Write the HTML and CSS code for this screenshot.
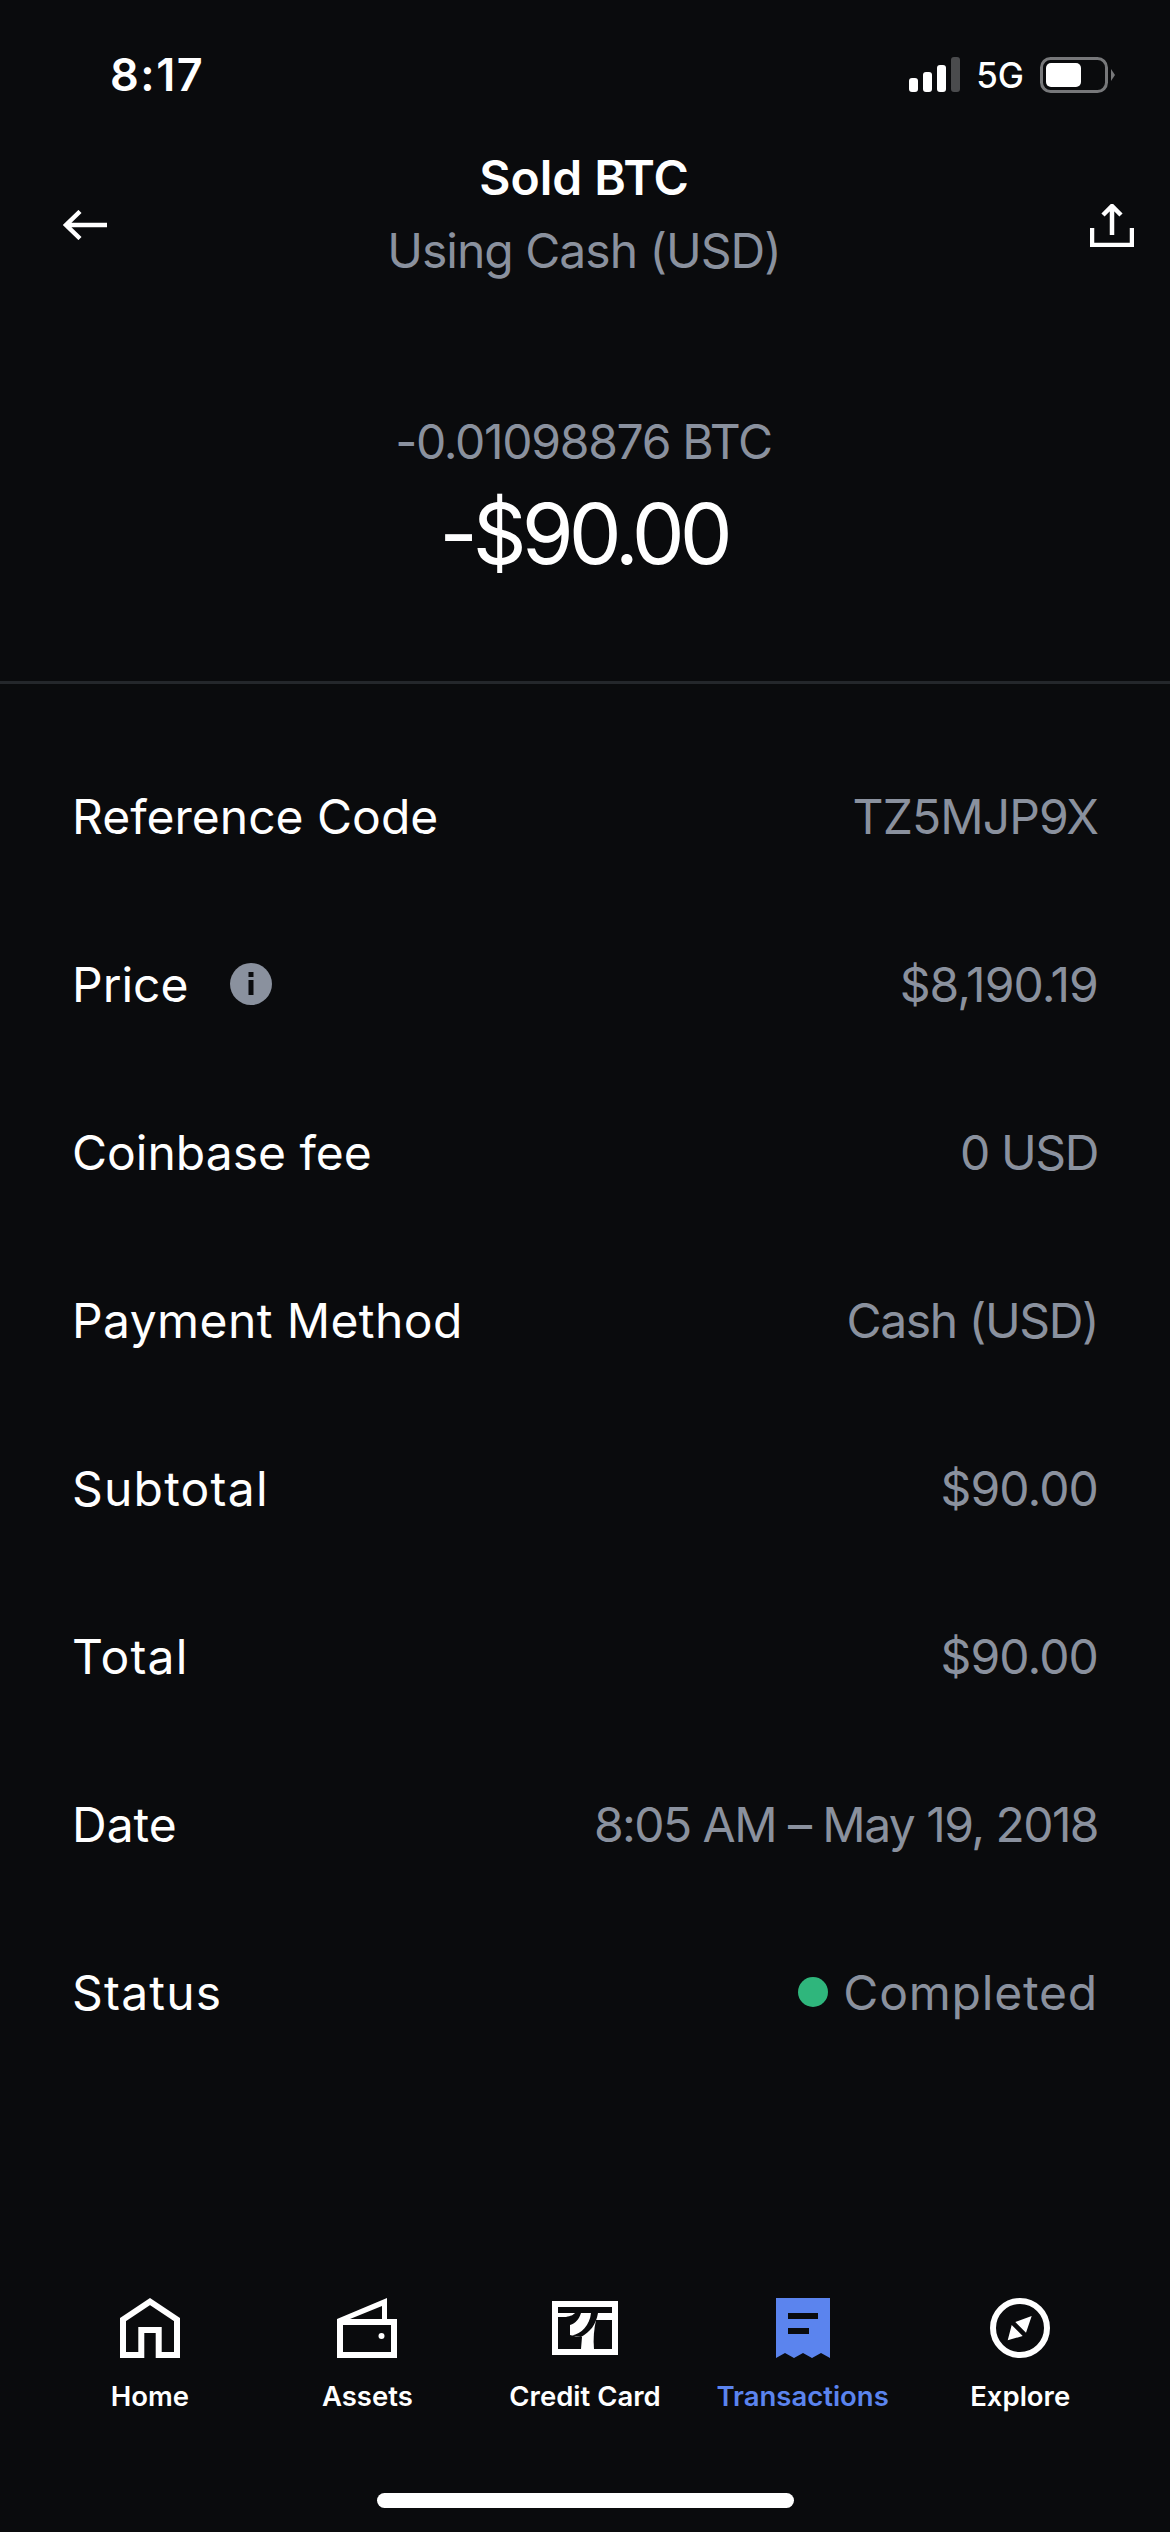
FILE: index.html
```html
<!DOCTYPE html>
<html lang="en">
<head>
<meta charset="utf-8">
<title>Sold BTC</title>
<link rel="stylesheet" href="styles.css">
</head>
<body>
<div class="screen">
  <div class="status">
    <span class="time">8:17</span>
    <div class="status-right">
      <svg class="signal" width="51" height="36" viewBox="0 0 51 36"><rect x="0" y="21" width="9" height="14" rx="3" fill="#fff"/><rect x="14" y="15" width="9" height="20" rx="3" fill="#fff"/><rect x="28" y="8" width="9" height="27" rx="3" fill="#fff"/><rect x="42" y="0" width="9" height="35" rx="3" fill="#4a4b4d"/></svg>
      <span class="net">5G</span>
      <svg class="batt" width="75" height="36" viewBox="0 0 75 36"><rect x="1.5" y="1.5" width="65" height="33" rx="9" fill="none" stroke="#77787a" stroke-width="3"/><rect x="6" y="6" width="35" height="24" rx="5" fill="#fff"/><path d="M71 12 L75 18 L71 24 Z" fill="#77787a"/></svg>
    </div>
  </div>
  <header class="head">
    <svg class="back" width="45" height="30" viewBox="0 0 45 30"><path d="M45 15 H4 M18 1.5 L4 15 L18 28.5" fill="none" stroke="#fff" stroke-width="4.5"/></svg>
    <div class="titles">
      <div class="title">Sold BTC</div>
      <div class="subtitle">Using Cash (USD)</div>
    </div>
    <svg class="share" width="44" height="43" viewBox="0 0 44 43"><path d="M22 31 V3 M13 11 L22 2 L31 11" fill="none" stroke="#fff" stroke-width="4.5"/><path d="M2 24 V41 H42 V24" fill="none" stroke="#fff" stroke-width="4.5"/></svg>
  </header>
  <section class="amounts">
    <div class="crypto">-0.01098876 BTC</div>
    <div class="fiat">-$90.00</div>
  </section>
  <section class="rows">
    <div class="row"><span class="key">Reference Code</span><span class="val">TZ5MJP9X</span></div>
    <div class="row"><span class="key price">Price<svg width="42" height="42" viewBox="0 0 42 42"><circle cx="21" cy="21" r="21" fill="#8a919e"/><rect x="18.5" y="9" width="5" height="5" fill="#0a0b0d"/><rect x="18.5" y="17" width="5" height="15" fill="#0a0b0d"/></svg></span><span class="val">$8,190.19</span></div>
    <div class="row"><span class="key">Coinbase fee</span><span class="val tight">0 USD</span></div>
    <div class="row"><span class="key slight">Payment Method</span><span class="val tight">Cash (USD)</span></div>
    <div class="row"><span class="key wide">Subtotal</span><span class="val">$90.00</span></div>
    <div class="row"><span class="key wide">Total</span><span class="val">$90.00</span></div>
    <div class="row"><span class="key">Date</span><span class="val date">8:05 AM – May 19, 2018</span></div>
    <div class="row"><span class="key wide">Status</span><span class="val done"><i class="dot"></i>Completed</span></div>
  </section>
  <nav class="tabs">
    <div class="tab">
      <svg width="60" height="60" viewBox="0 0 60 60"><path d="M3 57 V21.5 L30 3.6 L57 21.5 V57 H38.7 V32 H21.3 V57 Z" fill="none" stroke="#fff" stroke-width="6"/></svg>
      <span>Home</span>
    </div>
    <div class="tab">
      <svg width="60" height="60" viewBox="0 0 60 60"><rect x="3" y="24" width="54" height="33" fill="none" stroke="#fff" stroke-width="6"/><path d="M0 21 L50 0 V22 H45 V8 L13 21 Z" fill="#fff"/><circle cx="44.5" cy="38" r="3" fill="#fff"/></svg>
      <span>Assets</span>
    </div>
    <div class="tab">
      <svg width="66" height="60" viewBox="0 -3 66 60"><rect width="66" height="54" fill="#fff"/><path d="M6 6 H60 V12 H6 Z" fill="#0a0b0d"/><path d="M6 16 H14 C19 15 21 14 23 12 H29 C27 18 24 22 18 24 V34 C22 35 26 36 30 36 L29 48 H6 Z" fill="#0a0b0d"/><path d="M44 19 H60 V48 H42 C41 38 42 28 44 19 Z" fill="#0a0b0d"/><path d="M39 12 H46 C44 24 38 31 29 36 L20 34.5 C29 33 38 24 39 12 Z" fill="#0a0b0d"/></svg>
      <span>Credit Card</span>
    </div>
    <div class="tab active">
      <svg width="54" height="60" viewBox="0 0 54 60"><path d="M0 0 H54 V60 L45 55 L36 60 L27 55 L18 60 L9 55 L0 60 Z" fill="#5b84ee"/><rect x="12" y="15" width="30" height="6" fill="#0a0b0d"/><rect x="12" y="30" width="21" height="6" fill="#0a0b0d"/></svg>
      <span>Transactions</span>
    </div>
    <div class="tab">
      <svg width="60" height="60" viewBox="0 0 60 60"><circle cx="30" cy="30" r="27" fill="none" stroke="#fff" stroke-width="6"/><path d="M41.7 18 L25.3 24 L36 34.7 Z M17.7 42.3 L21.7 27 L32.7 38 Z" fill="#fff"/></svg>
      <span>Explore</span>
    </div>
  </nav>
  <div class="home-bar"></div>
</div>
</body>
</html>
```
FILE: styles.css
```css
* { box-sizing: border-box; }
html, body { margin: 0; padding: 0; background: #0a0b0d; }
.screen {
  width: 1170px;
  height: 2532px;
  display: flex;
  flex-direction: column;
  background: #0a0b0d;
  color: #fff;
  font-family: Inter, "Liberation Sans", sans-serif;
  overflow: hidden;
}
.status {
  height: 140px;
  padding: 50px 55px 0 110px;
  display: flex;
  justify-content: space-between;
  align-items: flex-start;
}
.time { font-size: 45px; line-height: 50px; font-weight: 600; letter-spacing: 1.5px; }
.status-right { display: flex; align-items: center; gap: 16px; height: 50px; }
.net { font-size: 35px; font-weight: 500; line-height: 36px; }
.head {
  height: 150px;
  padding-right: 2px;
  display: grid;
  grid-template-columns: 1fr auto 1fr;
  align-items: start;
}
.back { justify-self: start; margin: 70px 0 0 62px; }
.share { justify-self: end; margin: 64px 34px 0 0; }
.titles { text-align: center; padding-top: 1px; }
.title { font-size: 48px; line-height: 73px; font-weight: 600; }
.subtitle { font-size: 48px; line-height: 73px; color: #8a919e; letter-spacing: -1px; }
.amounts {
  height: 394px;
  padding-top: 122px;
  padding-right: 3px;
  text-align: center;
  border-bottom: 3px solid #24272b;
}
.crypto { font-size: 48px; line-height: 60px; color: #8a919e; letter-spacing: -1.3px; }
.fiat { font-size: 84px; line-height: 96px; margin-top: 14px; letter-spacing: -5px; }
.rows { padding: 48px 72px 0; display: flex; flex-direction: column; }
.row {
  height: 168px;
  display: flex;
  align-items: center;
  justify-content: space-between;
  font-size: 48px;
}
.key { display: flex; align-items: center; gap: 41px; }
.key.wide { letter-spacing: 1.2px; }
.key.slight { letter-spacing: 0.4px; }
.val { color: #8a919e; display: flex; align-items: center; letter-spacing: -0.9px; }
.val.tight { letter-spacing: -1.4px; }
.val.date { letter-spacing: -1.55px; }
.val.done { letter-spacing: 0.8px; }
.dot { width: 30px; height: 30px; border-radius: 50%; background: #2fb67c; margin-right: 15px; }
.tabs {
  margin-top: auto;
  padding: 0 41px;
  display: grid;
  grid-template-columns: repeat(5, 1fr);
}
.tab {
  display: flex;
  flex-direction: column;
  align-items: center;
  gap: 21px;
  font-size: 27.5px;
  font-weight: 600;
  line-height: 34px;
  white-space: nowrap;
}
.tab.active { color: #5b84ee; }
.home-bar {
  width: 417px;
  height: 15px;
  border-radius: 8px;
  background: #fff;
  margin: 80px 0 24px 377px;
}
```
